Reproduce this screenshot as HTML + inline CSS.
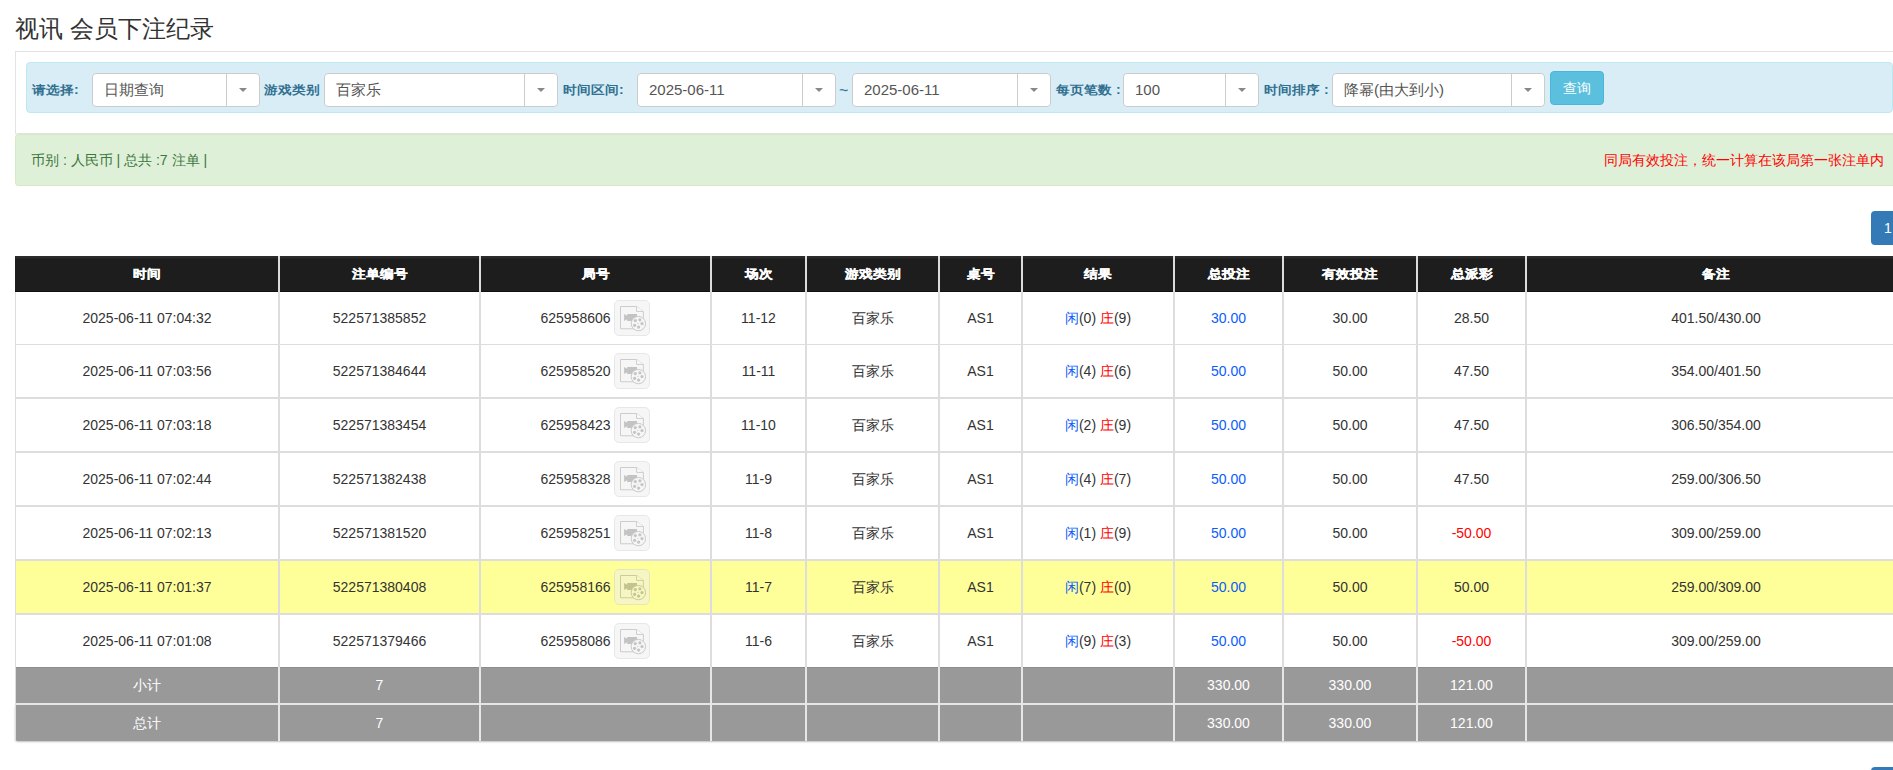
<!DOCTYPE html>
<html><head><meta charset="utf-8">
<style>
*{box-sizing:border-box;margin:0;padding:0}
html,body{width:1893px;height:770px;overflow:hidden;background:#fff}
body{position:relative;font-family:"Liberation Sans",sans-serif;font-size:14px;color:#333}
.abs{position:absolute}
.t{position:absolute;white-space:nowrap;text-align:center}
.title{position:absolute;left:15px;top:11px;font-size:24px;line-height:36px;color:#333;white-space:nowrap}
.well{position:absolute;left:15px;top:51px;width:1900px;height:83px;border:1px solid #e3e3e3;border-right:none;background:#fff}
.bar{position:absolute;left:26px;top:62px;width:1867px;height:51px;background:#d9edf7;border:1px solid #bce8f1;border-radius:4px}
.lbl{position:absolute;top:65px;height:51px;line-height:51px;font-weight:900;transform:scaleY(.88);color:#31708f;white-space:nowrap}
.sel{position:absolute;top:73px;height:34px;background:#fff;border:1px solid #ccc;border-radius:4px}
.sel .v{position:absolute;left:11px;top:0;line-height:32px;font-size:15px;color:#555;white-space:nowrap}
.sel .d{position:absolute;top:0;bottom:0;width:1px;background:#ccc}
.sel .ar{position:absolute;top:14px;width:0;height:0;border-left:4px solid transparent;border-right:4px solid transparent;border-top:4px solid #888}
.btn{position:absolute;left:1550px;top:71px;width:54px;height:34px;background:#5bc0de;border:1px solid #46b8da;border-radius:4px;color:#fff;text-align:center;line-height:32px;font-size:14px}
.green{position:absolute;left:15px;top:134px;width:1900px;height:52px;background:#dff0d8;border:1px solid #d6e9c6;border-right:none;border-radius:4px;color:#3c763d}
.page1{position:absolute;left:1871px;top:211px;width:40px;height:34px;background:#337ab7;border-radius:4px;color:#fff;line-height:34px;padding-left:13px;font-size:14px}
.page2{position:absolute;left:1871px;top:767px;width:40px;height:34px;background:#337ab7;border-radius:4px}
.hdr{position:absolute;left:15px;top:256px;width:1890px;height:36px;background:linear-gradient(#2c2c2c 0,#2a2a2a 2px,#1d1d1d 3px,#1d1d1d 35px,#101010 35px)}
.hdr .t{color:#fff;font-weight:900;line-height:36px;top:0;transform:scaleY(.88);-webkit-text-stroke:.35px #fff}
.row{position:absolute;left:15px;width:1890px;background:#fff}
.ysel{background:#ffff99}
.sum{position:absolute;left:15px;width:1890px;background:#999}
.vl{position:absolute;width:2px;background:#ddd}
.hl{position:absolute;left:15px;width:1890px;background:#ddd}
.ib{position:absolute;width:36px;height:36px;border:1px solid #d0d0d0;border-radius:5px;background:#efefef;opacity:.5}
.ib svg{position:absolute;left:5px;top:5px}
.blue{color:#0a5cff}
.red{color:#ff0000}
</style></head><body>

<div class="title">视讯 会员下注纪录</div>
<div class="well"></div>
<div class="bar"></div>
<div class="lbl" style="left:32px">请选择:</div>
<div class="lbl" style="left:264px">游戏类别</div>
<div class="lbl" style="left:563px">时间区间:</div>
<div class="lbl" style="left:1056px">每页笔数 :</div>
<div class="lbl" style="left:1264px">时间排序 :</div>
<div class="t" style="left:839px;top:65px;line-height:51px;color:#31708f;font-size:16px">~</div>
<div class="sel" style="left:92px;width:168px"><div class="v">日期查询</div><div class="d" style="left:133px"></div><div class="ar" style="left:146px"></div></div>
<div class="sel" style="left:324px;width:234px"><div class="v">百家乐</div><div class="d" style="left:199px"></div><div class="ar" style="left:212px"></div></div>
<div class="sel" style="left:637px;width:199px"><div class="v">2025-06-11</div><div class="d" style="left:164px"></div><div class="ar" style="left:177px"></div></div>
<div class="sel" style="left:852px;width:199px"><div class="v">2025-06-11</div><div class="d" style="left:164px"></div><div class="ar" style="left:177px"></div></div>
<div class="sel" style="left:1123px;width:136px"><div class="v">100</div><div class="d" style="left:101px"></div><div class="ar" style="left:114px"></div></div>
<div class="sel" style="left:1332px;width:213px"><div class="v">降幂(由大到小)</div><div class="d" style="left:178px"></div><div class="ar" style="left:191px"></div></div>
<div class="btn">查询</div>
<div class="green"><div class="abs" style="left:15px;top:0;line-height:50px;white-space:nowrap">币别 : 人民币 | 总共 :7 注单 |</div><div class="abs red" style="left:1588px;top:0;line-height:50px;white-space:nowrap">同局有效投注，统一计算在该局第一张注单内</div></div>
<div class="page1">1</div>
<div class="page2"></div>
<div class="hdr">
<div class="t" style="left:1px;width:262px">时间</div>
<div class="t" style="left:265px;width:199px">注单编号</div>
<div class="t" style="left:466px;width:229px">局号</div>
<div class="t" style="left:697px;width:93px">场次</div>
<div class="t" style="left:792px;width:131px">游戏类别</div>
<div class="t" style="left:925px;width:81px">桌号</div>
<div class="t" style="left:1008px;width:150px">结果</div>
<div class="t" style="left:1160px;width:107px">总投注</div>
<div class="t" style="left:1269px;width:132px">有效投注</div>
<div class="t" style="left:1403px;width:107px">总派彩</div>
<div class="t" style="left:1512px;width:378px">备注</div>
</div>
<div class="row" style="top:292px;height:52px"></div>
<div class="t" style="left:16px;width:262px;top:292px;line-height:52px">2025-06-11 07:04:32</div>
<div class="t" style="left:280px;width:199px;top:292px;line-height:52px">522571385852</div>
<div class="t" style="left:481px;width:229px;top:292px;line-height:52px">625958606<span style="display:inline-block;width:40px"></span></div>
<div class="ib" style="left:614px;top:300px"><svg width="26" height="26" viewBox="0 0 26 26"><path d="M0.5 0.5H16.6L23.4 5.6V22.8H0.5Z" fill="#efefef" stroke="#9b9b9b" stroke-width="1"/><path d="M16.6 0.5V5.4H23.4" fill="#f8f8f8" stroke="#9b9b9b" stroke-width="1"/><path d="M4.1 8.05L7.2 9.7V8.05H17V14.9H7.2V13.2L4.1 14.9Z" fill="#898989"/><circle cx="18.4" cy="17.6" r="7.2" fill="#eeeeee" stroke="#979797" stroke-width="1"/><circle cx="15.3" cy="14.6" r="1.6" fill="#8d8d8d"/><circle cx="19.9" cy="13.8" r="1.6" fill="#8d8d8d"/><circle cx="22" cy="17.6" r="1.6" fill="#8d8d8d"/><circle cx="18.6" cy="21.1" r="1.6" fill="#8d8d8d"/><circle cx="14.6" cy="19.3" r="1.6" fill="#8d8d8d"/><circle cx="17.9" cy="17.4" r="0.6" fill="#a0a0a0"/></svg></div>
<div class="t" style="left:712px;width:93px;top:292px;line-height:52px">11-12</div>
<div class="t" style="left:807px;width:131px;top:292px;line-height:52px">百家乐</div>
<div class="t" style="left:940px;width:81px;top:292px;line-height:52px">AS1</div>
<div class="t" style="left:1023px;width:150px;top:292px;line-height:52px"><span class="blue">闲</span>(0) <span class="red">庄</span>(9)</div>
<div class="t" style="left:1175px;width:107px;top:292px;line-height:52px"><span class="blue">30.00</span></div>
<div class="t" style="left:1284px;width:132px;top:292px;line-height:52px">30.00</div>
<div class="t" style="left:1418px;width:107px;top:292px;line-height:52px">28.50</div>
<div class="t" style="left:1527px;width:378px;top:292px;line-height:52px">401.50/430.00</div>
<div class="row" style="top:345px;height:52px"></div>
<div class="t" style="left:16px;width:262px;top:345px;line-height:52px">2025-06-11 07:03:56</div>
<div class="t" style="left:280px;width:199px;top:345px;line-height:52px">522571384644</div>
<div class="t" style="left:481px;width:229px;top:345px;line-height:52px">625958520<span style="display:inline-block;width:40px"></span></div>
<div class="ib" style="left:614px;top:353px"><svg width="26" height="26" viewBox="0 0 26 26"><path d="M0.5 0.5H16.6L23.4 5.6V22.8H0.5Z" fill="#efefef" stroke="#9b9b9b" stroke-width="1"/><path d="M16.6 0.5V5.4H23.4" fill="#f8f8f8" stroke="#9b9b9b" stroke-width="1"/><path d="M4.1 8.05L7.2 9.7V8.05H17V14.9H7.2V13.2L4.1 14.9Z" fill="#898989"/><circle cx="18.4" cy="17.6" r="7.2" fill="#eeeeee" stroke="#979797" stroke-width="1"/><circle cx="15.3" cy="14.6" r="1.6" fill="#8d8d8d"/><circle cx="19.9" cy="13.8" r="1.6" fill="#8d8d8d"/><circle cx="22" cy="17.6" r="1.6" fill="#8d8d8d"/><circle cx="18.6" cy="21.1" r="1.6" fill="#8d8d8d"/><circle cx="14.6" cy="19.3" r="1.6" fill="#8d8d8d"/><circle cx="17.9" cy="17.4" r="0.6" fill="#a0a0a0"/></svg></div>
<div class="t" style="left:712px;width:93px;top:345px;line-height:52px">11-11</div>
<div class="t" style="left:807px;width:131px;top:345px;line-height:52px">百家乐</div>
<div class="t" style="left:940px;width:81px;top:345px;line-height:52px">AS1</div>
<div class="t" style="left:1023px;width:150px;top:345px;line-height:52px"><span class="blue">闲</span>(4) <span class="red">庄</span>(6)</div>
<div class="t" style="left:1175px;width:107px;top:345px;line-height:52px"><span class="blue">50.00</span></div>
<div class="t" style="left:1284px;width:132px;top:345px;line-height:52px">50.00</div>
<div class="t" style="left:1418px;width:107px;top:345px;line-height:52px">47.50</div>
<div class="t" style="left:1527px;width:378px;top:345px;line-height:52px">354.00/401.50</div>
<div class="row" style="top:399px;height:52px"></div>
<div class="t" style="left:16px;width:262px;top:399px;line-height:52px">2025-06-11 07:03:18</div>
<div class="t" style="left:280px;width:199px;top:399px;line-height:52px">522571383454</div>
<div class="t" style="left:481px;width:229px;top:399px;line-height:52px">625958423<span style="display:inline-block;width:40px"></span></div>
<div class="ib" style="left:614px;top:407px"><svg width="26" height="26" viewBox="0 0 26 26"><path d="M0.5 0.5H16.6L23.4 5.6V22.8H0.5Z" fill="#efefef" stroke="#9b9b9b" stroke-width="1"/><path d="M16.6 0.5V5.4H23.4" fill="#f8f8f8" stroke="#9b9b9b" stroke-width="1"/><path d="M4.1 8.05L7.2 9.7V8.05H17V14.9H7.2V13.2L4.1 14.9Z" fill="#898989"/><circle cx="18.4" cy="17.6" r="7.2" fill="#eeeeee" stroke="#979797" stroke-width="1"/><circle cx="15.3" cy="14.6" r="1.6" fill="#8d8d8d"/><circle cx="19.9" cy="13.8" r="1.6" fill="#8d8d8d"/><circle cx="22" cy="17.6" r="1.6" fill="#8d8d8d"/><circle cx="18.6" cy="21.1" r="1.6" fill="#8d8d8d"/><circle cx="14.6" cy="19.3" r="1.6" fill="#8d8d8d"/><circle cx="17.9" cy="17.4" r="0.6" fill="#a0a0a0"/></svg></div>
<div class="t" style="left:712px;width:93px;top:399px;line-height:52px">11-10</div>
<div class="t" style="left:807px;width:131px;top:399px;line-height:52px">百家乐</div>
<div class="t" style="left:940px;width:81px;top:399px;line-height:52px">AS1</div>
<div class="t" style="left:1023px;width:150px;top:399px;line-height:52px"><span class="blue">闲</span>(2) <span class="red">庄</span>(9)</div>
<div class="t" style="left:1175px;width:107px;top:399px;line-height:52px"><span class="blue">50.00</span></div>
<div class="t" style="left:1284px;width:132px;top:399px;line-height:52px">50.00</div>
<div class="t" style="left:1418px;width:107px;top:399px;line-height:52px">47.50</div>
<div class="t" style="left:1527px;width:378px;top:399px;line-height:52px">306.50/354.00</div>
<div class="row" style="top:453px;height:52px"></div>
<div class="t" style="left:16px;width:262px;top:453px;line-height:52px">2025-06-11 07:02:44</div>
<div class="t" style="left:280px;width:199px;top:453px;line-height:52px">522571382438</div>
<div class="t" style="left:481px;width:229px;top:453px;line-height:52px">625958328<span style="display:inline-block;width:40px"></span></div>
<div class="ib" style="left:614px;top:461px"><svg width="26" height="26" viewBox="0 0 26 26"><path d="M0.5 0.5H16.6L23.4 5.6V22.8H0.5Z" fill="#efefef" stroke="#9b9b9b" stroke-width="1"/><path d="M16.6 0.5V5.4H23.4" fill="#f8f8f8" stroke="#9b9b9b" stroke-width="1"/><path d="M4.1 8.05L7.2 9.7V8.05H17V14.9H7.2V13.2L4.1 14.9Z" fill="#898989"/><circle cx="18.4" cy="17.6" r="7.2" fill="#eeeeee" stroke="#979797" stroke-width="1"/><circle cx="15.3" cy="14.6" r="1.6" fill="#8d8d8d"/><circle cx="19.9" cy="13.8" r="1.6" fill="#8d8d8d"/><circle cx="22" cy="17.6" r="1.6" fill="#8d8d8d"/><circle cx="18.6" cy="21.1" r="1.6" fill="#8d8d8d"/><circle cx="14.6" cy="19.3" r="1.6" fill="#8d8d8d"/><circle cx="17.9" cy="17.4" r="0.6" fill="#a0a0a0"/></svg></div>
<div class="t" style="left:712px;width:93px;top:453px;line-height:52px">11-9</div>
<div class="t" style="left:807px;width:131px;top:453px;line-height:52px">百家乐</div>
<div class="t" style="left:940px;width:81px;top:453px;line-height:52px">AS1</div>
<div class="t" style="left:1023px;width:150px;top:453px;line-height:52px"><span class="blue">闲</span>(4) <span class="red">庄</span>(7)</div>
<div class="t" style="left:1175px;width:107px;top:453px;line-height:52px"><span class="blue">50.00</span></div>
<div class="t" style="left:1284px;width:132px;top:453px;line-height:52px">50.00</div>
<div class="t" style="left:1418px;width:107px;top:453px;line-height:52px">47.50</div>
<div class="t" style="left:1527px;width:378px;top:453px;line-height:52px">259.00/306.50</div>
<div class="row" style="top:507px;height:52px"></div>
<div class="t" style="left:16px;width:262px;top:507px;line-height:52px">2025-06-11 07:02:13</div>
<div class="t" style="left:280px;width:199px;top:507px;line-height:52px">522571381520</div>
<div class="t" style="left:481px;width:229px;top:507px;line-height:52px">625958251<span style="display:inline-block;width:40px"></span></div>
<div class="ib" style="left:614px;top:515px"><svg width="26" height="26" viewBox="0 0 26 26"><path d="M0.5 0.5H16.6L23.4 5.6V22.8H0.5Z" fill="#efefef" stroke="#9b9b9b" stroke-width="1"/><path d="M16.6 0.5V5.4H23.4" fill="#f8f8f8" stroke="#9b9b9b" stroke-width="1"/><path d="M4.1 8.05L7.2 9.7V8.05H17V14.9H7.2V13.2L4.1 14.9Z" fill="#898989"/><circle cx="18.4" cy="17.6" r="7.2" fill="#eeeeee" stroke="#979797" stroke-width="1"/><circle cx="15.3" cy="14.6" r="1.6" fill="#8d8d8d"/><circle cx="19.9" cy="13.8" r="1.6" fill="#8d8d8d"/><circle cx="22" cy="17.6" r="1.6" fill="#8d8d8d"/><circle cx="18.6" cy="21.1" r="1.6" fill="#8d8d8d"/><circle cx="14.6" cy="19.3" r="1.6" fill="#8d8d8d"/><circle cx="17.9" cy="17.4" r="0.6" fill="#a0a0a0"/></svg></div>
<div class="t" style="left:712px;width:93px;top:507px;line-height:52px">11-8</div>
<div class="t" style="left:807px;width:131px;top:507px;line-height:52px">百家乐</div>
<div class="t" style="left:940px;width:81px;top:507px;line-height:52px">AS1</div>
<div class="t" style="left:1023px;width:150px;top:507px;line-height:52px"><span class="blue">闲</span>(1) <span class="red">庄</span>(9)</div>
<div class="t" style="left:1175px;width:107px;top:507px;line-height:52px"><span class="blue">50.00</span></div>
<div class="t" style="left:1284px;width:132px;top:507px;line-height:52px">50.00</div>
<div class="t" style="left:1418px;width:107px;top:507px;line-height:52px"><span class="red">-50.00</span></div>
<div class="t" style="left:1527px;width:378px;top:507px;line-height:52px">309.00/259.00</div>
<div class="row ysel" style="top:561px;height:52px"></div>
<div class="t" style="left:16px;width:262px;top:561px;line-height:52px">2025-06-11 07:01:37</div>
<div class="t" style="left:280px;width:199px;top:561px;line-height:52px">522571380408</div>
<div class="t" style="left:481px;width:229px;top:561px;line-height:52px">625958166<span style="display:inline-block;width:40px"></span></div>
<div class="ib" style="left:614px;top:569px"><svg width="26" height="26" viewBox="0 0 26 26"><path d="M0.5 0.5H16.6L23.4 5.6V22.8H0.5Z" fill="#efefef" stroke="#9b9b9b" stroke-width="1"/><path d="M16.6 0.5V5.4H23.4" fill="#f8f8f8" stroke="#9b9b9b" stroke-width="1"/><path d="M4.1 8.05L7.2 9.7V8.05H17V14.9H7.2V13.2L4.1 14.9Z" fill="#898989"/><circle cx="18.4" cy="17.6" r="7.2" fill="#eeeeee" stroke="#979797" stroke-width="1"/><circle cx="15.3" cy="14.6" r="1.6" fill="#8d8d8d"/><circle cx="19.9" cy="13.8" r="1.6" fill="#8d8d8d"/><circle cx="22" cy="17.6" r="1.6" fill="#8d8d8d"/><circle cx="18.6" cy="21.1" r="1.6" fill="#8d8d8d"/><circle cx="14.6" cy="19.3" r="1.6" fill="#8d8d8d"/><circle cx="17.9" cy="17.4" r="0.6" fill="#a0a0a0"/></svg></div>
<div class="t" style="left:712px;width:93px;top:561px;line-height:52px">11-7</div>
<div class="t" style="left:807px;width:131px;top:561px;line-height:52px">百家乐</div>
<div class="t" style="left:940px;width:81px;top:561px;line-height:52px">AS1</div>
<div class="t" style="left:1023px;width:150px;top:561px;line-height:52px"><span class="blue">闲</span>(7) <span class="red">庄</span>(0)</div>
<div class="t" style="left:1175px;width:107px;top:561px;line-height:52px"><span class="blue">50.00</span></div>
<div class="t" style="left:1284px;width:132px;top:561px;line-height:52px">50.00</div>
<div class="t" style="left:1418px;width:107px;top:561px;line-height:52px">50.00</div>
<div class="t" style="left:1527px;width:378px;top:561px;line-height:52px">259.00/309.00</div>
<div class="row" style="top:615px;height:52px"></div>
<div class="t" style="left:16px;width:262px;top:615px;line-height:52px">2025-06-11 07:01:08</div>
<div class="t" style="left:280px;width:199px;top:615px;line-height:52px">522571379466</div>
<div class="t" style="left:481px;width:229px;top:615px;line-height:52px">625958086<span style="display:inline-block;width:40px"></span></div>
<div class="ib" style="left:614px;top:623px"><svg width="26" height="26" viewBox="0 0 26 26"><path d="M0.5 0.5H16.6L23.4 5.6V22.8H0.5Z" fill="#efefef" stroke="#9b9b9b" stroke-width="1"/><path d="M16.6 0.5V5.4H23.4" fill="#f8f8f8" stroke="#9b9b9b" stroke-width="1"/><path d="M4.1 8.05L7.2 9.7V8.05H17V14.9H7.2V13.2L4.1 14.9Z" fill="#898989"/><circle cx="18.4" cy="17.6" r="7.2" fill="#eeeeee" stroke="#979797" stroke-width="1"/><circle cx="15.3" cy="14.6" r="1.6" fill="#8d8d8d"/><circle cx="19.9" cy="13.8" r="1.6" fill="#8d8d8d"/><circle cx="22" cy="17.6" r="1.6" fill="#8d8d8d"/><circle cx="18.6" cy="21.1" r="1.6" fill="#8d8d8d"/><circle cx="14.6" cy="19.3" r="1.6" fill="#8d8d8d"/><circle cx="17.9" cy="17.4" r="0.6" fill="#a0a0a0"/></svg></div>
<div class="t" style="left:712px;width:93px;top:615px;line-height:52px">11-6</div>
<div class="t" style="left:807px;width:131px;top:615px;line-height:52px">百家乐</div>
<div class="t" style="left:940px;width:81px;top:615px;line-height:52px">AS1</div>
<div class="t" style="left:1023px;width:150px;top:615px;line-height:52px"><span class="blue">闲</span>(9) <span class="red">庄</span>(3)</div>
<div class="t" style="left:1175px;width:107px;top:615px;line-height:52px"><span class="blue">50.00</span></div>
<div class="t" style="left:1284px;width:132px;top:615px;line-height:52px">50.00</div>
<div class="t" style="left:1418px;width:107px;top:615px;line-height:52px"><span class="red">-50.00</span></div>
<div class="t" style="left:1527px;width:378px;top:615px;line-height:52px">309.00/259.00</div>
<div class="hl" style="top:344px;height:1px"></div>
<div class="hl" style="top:397px;height:2px"></div>
<div class="hl" style="top:451px;height:2px"></div>
<div class="hl" style="top:505px;height:2px"></div>
<div class="hl" style="top:559px;height:2px"></div>
<div class="hl" style="top:613px;height:2px"></div>
<div class="sum" style="top:667px;height:36px;"></div>
<div class="t" style="left:16px;width:262px;top:667px;line-height:36px;color:#fff">小计</div>
<div class="t" style="left:280px;width:199px;top:667px;line-height:36px;color:#fff">7</div>
<div class="t" style="left:1175px;width:107px;top:667px;line-height:36px;color:#fff">330.00</div>
<div class="t" style="left:1284px;width:132px;top:667px;line-height:36px;color:#fff">330.00</div>
<div class="t" style="left:1418px;width:107px;top:667px;line-height:36px;color:#fff">121.00</div>
<div class="sum" style="top:705px;height:36px;border-bottom-left-radius:3px;box-shadow:0 1px 2px rgba(0,0,0,.25);"></div>
<div class="t" style="left:16px;width:262px;top:705px;line-height:36px;color:#fff">总计</div>
<div class="t" style="left:280px;width:199px;top:705px;line-height:36px;color:#fff">7</div>
<div class="t" style="left:1175px;width:107px;top:705px;line-height:36px;color:#fff">330.00</div>
<div class="t" style="left:1284px;width:132px;top:705px;line-height:36px;color:#fff">330.00</div>
<div class="t" style="left:1418px;width:107px;top:705px;line-height:36px;color:#fff">121.00</div>
<div class="hl" style="top:703px;height:2px;background:#e6e6e6"></div>
<div class="hl" style="top:667px;height:1px;background:#8e8e8e"></div>
<div class="vl" style="left:15px;top:292px;height:449px;width:1px"></div>
<div class="vl" style="left:278px;top:256px;height:36px;background:#dcdcdc"></div>
<div class="vl" style="left:278px;top:292px;height:375px"></div>
<div class="vl" style="left:278px;top:667px;height:74px;background:#e6e6e6"></div>
<div class="vl" style="left:479px;top:256px;height:36px;background:#dcdcdc"></div>
<div class="vl" style="left:479px;top:292px;height:375px"></div>
<div class="vl" style="left:479px;top:667px;height:74px;background:#e6e6e6"></div>
<div class="vl" style="left:710px;top:256px;height:36px;background:#dcdcdc"></div>
<div class="vl" style="left:710px;top:292px;height:375px"></div>
<div class="vl" style="left:710px;top:667px;height:74px;background:#e6e6e6"></div>
<div class="vl" style="left:805px;top:256px;height:36px;background:#dcdcdc"></div>
<div class="vl" style="left:805px;top:292px;height:375px"></div>
<div class="vl" style="left:805px;top:667px;height:74px;background:#e6e6e6"></div>
<div class="vl" style="left:938px;top:256px;height:36px;background:#dcdcdc"></div>
<div class="vl" style="left:938px;top:292px;height:375px"></div>
<div class="vl" style="left:938px;top:667px;height:74px;background:#e6e6e6"></div>
<div class="vl" style="left:1021px;top:256px;height:36px;background:#dcdcdc"></div>
<div class="vl" style="left:1021px;top:292px;height:375px"></div>
<div class="vl" style="left:1021px;top:667px;height:74px;background:#e6e6e6"></div>
<div class="vl" style="left:1173px;top:256px;height:36px;background:#dcdcdc"></div>
<div class="vl" style="left:1173px;top:292px;height:375px"></div>
<div class="vl" style="left:1173px;top:667px;height:74px;background:#e6e6e6"></div>
<div class="vl" style="left:1282px;top:256px;height:36px;background:#dcdcdc"></div>
<div class="vl" style="left:1282px;top:292px;height:375px"></div>
<div class="vl" style="left:1282px;top:667px;height:74px;background:#e6e6e6"></div>
<div class="vl" style="left:1416px;top:256px;height:36px;background:#dcdcdc"></div>
<div class="vl" style="left:1416px;top:292px;height:375px"></div>
<div class="vl" style="left:1416px;top:667px;height:74px;background:#e6e6e6"></div>
<div class="vl" style="left:1525px;top:256px;height:36px;background:#dcdcdc"></div>
<div class="vl" style="left:1525px;top:292px;height:375px"></div>
<div class="vl" style="left:1525px;top:667px;height:74px;background:#e6e6e6"></div>
</body></html>
